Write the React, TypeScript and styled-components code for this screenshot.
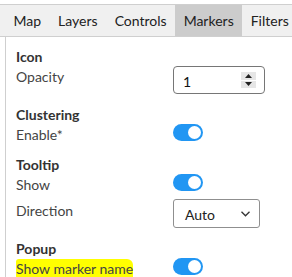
import { createGlobalStyle, styled } from 'styled-components';

const GlobalStyle = createGlobalStyle`
  html, body {
    margin: 0;
    padding: 0;
    background: #fff;
  }
  body {
    padding-top: 4px;
    font-family: Lato, "Open Sans", sans-serif;
    font-size: 14px;
    color: #444;
  }
`;

const TabBar = styled.div`
  display: flex;
  height: 31px;
  padding-left: 5px;
  background: #f0f0f0;
  border-top: 1px solid #cfcfcf;
  border-bottom: 1px solid #cfcfcf;
`;

const Tab = styled.div<{ $active?: boolean }>`
  padding: 0 8.5px;
  line-height: 31px;
  color: #222;
  background: ${(p) => (p.$active ? '#cccccc' : 'transparent')};
`;

const Panel = styled.div`
  margin-left: 5px;
  padding: 10px 0 0 10px;
  border-left: 1px solid #cfcfcf;
  height: 240px;
  box-sizing: border-box;
`;

const Section = styled.div`
  & + & {
    margin-top: 11px;
  }
`;

const Heading = styled.div`
  font-weight: 700;
  color: #333;
  line-height: 19px;
`;

const Rows = styled.div`
  display: flex;
  flex-direction: column;
  gap: 5px;
`;

const Row = styled.div`
  display: flex;
  align-items: flex-start;
`;

const Label = styled.div<{ $offset?: number }>`
  width: 157px;
  height: 19px;
  line-height: 19px;
  padding-top: ${(p) => p.$offset ?? 1}px;
  white-space: nowrap;
`;

const Marked = styled.span`
  background: #ffff00;
  padding: 1px 0 1px;
  border-radius: 3px 6px 1px 2px;
`;

const NumberBox = styled.div`
  display: flex;
  align-items: center;
  justify-content: space-between;
  box-sizing: border-box;
  width: 92px;
  height: 28px;
  padding: 2px 8px 0 9px;
  border: 1px solid #767676;
  border-radius: 4px;
  color: #111;
`;

const Spinner = styled.div`
  display: flex;
  flex-direction: column;
  width: 15px;
  height: 16px;
  margin-top: -2px;
  gap: 1px;
`;

const SpinHalf = styled.div`
  flex: 1;
  display: flex;
  align-items: center;
  justify-content: center;
  background: #e6e6e6;
`;

const Switch = styled.div`
  display: flex;
  align-items: center;
  justify-content: flex-end;
  box-sizing: border-box;
  width: 30px;
  height: 17px;
  padding-right: 2px;
  border-radius: 9px;
  background: #2196f3;
`;

const Knob = styled.div`
  width: 13px;
  height: 13px;
  border-radius: 50%;
  background: #fff;
`;

const Select = styled.div`
  display: flex;
  align-items: center;
  justify-content: space-between;
  box-sizing: border-box;
  width: 87px;
  height: 29px;
  padding: 1px 9px 0 11px;
  border: 1px solid #8f8f8f;
  border-radius: 3px;
  color: #222;
`;

const Toggle = () => (
  <Switch>
    <Knob />
  </Switch>
);

const Arrow = ({ up }: { up?: boolean }) => (
  <svg width="7" height="4" viewBox="0 0 7 4">
    <path d={up ? 'M0 4 L3.5 0 L7 4 Z' : 'M0 0 L3.5 4 L7 0 Z'} fill="#222" />
  </svg>
);

const tabs = ['Map', 'Layers', 'Controls', 'Markers', 'Filters'];

const App = () => (
  <>
    <GlobalStyle />
    <TabBar>
      {tabs.map((t) => (
        <Tab key={t} $active={t === 'Markers'}>
          {t}
        </Tab>
      ))}
    </TabBar>
    <Panel>
      <Section>
        <Heading>Icon</Heading>
        <Row>
          <Label>Opacity</Label>
          <NumberBox>
            <span>1</span>
            <Spinner>
              <SpinHalf>
                <Arrow up />
              </SpinHalf>
              <SpinHalf>
                <Arrow />
              </SpinHalf>
            </Spinner>
          </NumberBox>
        </Row>
      </Section>
      <Section>
        <Heading>Clustering</Heading>
        <Row>
          <Label>Enable*</Label>
          <Toggle />
        </Row>
      </Section>
      <Section>
        <Heading>Tooltip</Heading>
        <Rows>
          <Row>
            <Label>Show</Label>
            <Toggle />
          </Row>
          <Row>
            <Label $offset={2}>Direction</Label>
            <Select>
              <span>Auto</span>
              <svg width="9" height="6" viewBox="0 0 9 6">
                <path d="M0.5 0.8 L4.5 4.8 L8.5 0.8" fill="none" stroke="#333" strokeWidth="1.3" />
              </svg>
            </Select>
          </Row>
        </Rows>
      </Section>
      <Section>
        <Heading>Popup</Heading>
        <Row>
          <Label>
            <Marked>Show marker name</Marked>
          </Label>
          <Toggle />
        </Row>
      </Section>
    </Panel>
  </>
);

export default App;
